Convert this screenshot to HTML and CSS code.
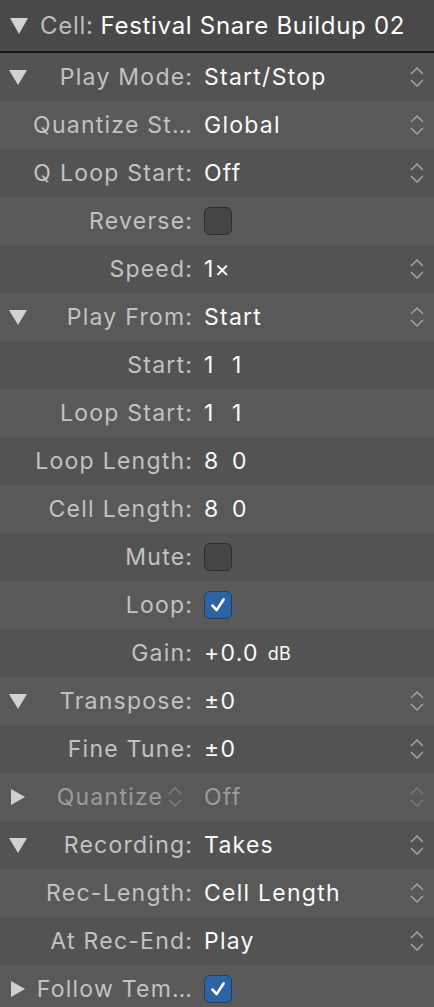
FILE: index.html
```html
<!DOCTYPE html>
<html>
<head>
<meta charset="utf-8">
<link rel="stylesheet" href="styles.css">
</head>
<body>
<div class="panel">
  <div class="header">
    <span class="tri-down big"></span>
    <span class="h-label">Cell:</span>
    <span class="h-value">Festival Snare Buildup 02</span>
  </div>

  <div class="row dark">
    <div class="lab"><span class="tri-down"></span><span class="t">Play Mode:</span></div>
    <div class="val">Start/Stop</div>
    <svg class="step" viewBox="0 0 14 22"><path d="M1 8 L7 2 L13 8 M1 14 L7 20 L13 14"/></svg>
  </div>
  <div class="row light">
    <div class="lab"><span class="t">Quantize St…</span></div>
    <div class="val">Global</div>
    <svg class="step" viewBox="0 0 14 22"><path d="M1 8 L7 2 L13 8 M1 14 L7 20 L13 14"/></svg>
  </div>
  <div class="row dark">
    <div class="lab"><span class="t">Q Loop Start:</span></div>
    <div class="val">Off</div>
    <svg class="step" viewBox="0 0 14 22"><path d="M1 8 L7 2 L13 8 M1 14 L7 20 L13 14"/></svg>
  </div>
  <div class="row light">
    <div class="lab"><span class="t">Reverse:</span></div>
    <div class="val"><span class="cb"></span></div>
  </div>
  <div class="row dark">
    <div class="lab"><span class="t">Speed:</span></div>
    <div class="val">1×</div>
    <svg class="step" viewBox="0 0 14 22"><path d="M1 8 L7 2 L13 8 M1 14 L7 20 L13 14"/></svg>
  </div>
  <div class="row light">
    <div class="lab"><span class="tri-down"></span><span class="t">Play From:</span></div>
    <div class="val">Start</div>
    <svg class="step" viewBox="0 0 14 22"><path d="M1 8 L7 2 L13 8 M1 14 L7 20 L13 14"/></svg>
  </div>
  <div class="row dark">
    <div class="lab"><span class="t">Start:</span></div>
    <div class="val"><span class="num">1</span><span class="num">1</span></div>
  </div>
  <div class="row light">
    <div class="lab"><span class="t">Loop Start:</span></div>
    <div class="val"><span class="num">1</span><span class="num">1</span></div>
  </div>
  <div class="row dark">
    <div class="lab"><span class="t">Loop Length:</span></div>
    <div class="val"><span class="num">8</span><span class="num">0</span></div>
  </div>
  <div class="row light">
    <div class="lab"><span class="t">Cell Length:</span></div>
    <div class="val"><span class="num">8</span><span class="num">0</span></div>
  </div>
  <div class="row dark">
    <div class="lab"><span class="t">Mute:</span></div>
    <div class="val"><span class="cb"></span></div>
  </div>
  <div class="row light">
    <div class="lab"><span class="t">Loop:</span></div>
    <div class="val"><span class="cb on"><svg viewBox="0 0 28 28"><path d="M8 14.5 L12.5 19.5 L20 8"/></svg></span></div>
  </div>
  <div class="row dark">
    <div class="lab"><span class="t">Gain:</span></div>
    <div class="val">+0.0<span class="unit">dB</span></div>
  </div>
  <div class="row light">
    <div class="lab"><span class="tri-down"></span><span class="t">Transpose:</span></div>
    <div class="val">±0</div>
    <svg class="step" viewBox="0 0 14 22"><path d="M1 8 L7 2 L13 8 M1 14 L7 20 L13 14"/></svg>
  </div>
  <div class="row dark">
    <div class="lab"><span class="t">Fine Tune:</span></div>
    <div class="val">±0</div>
    <svg class="step" viewBox="0 0 14 22"><path d="M1 8 L7 2 L13 8 M1 14 L7 20 L13 14"/></svg>
  </div>
  <div class="row light disabled">
    <div class="lab"><span class="tri-right"></span><span class="t">Quantize</span><svg class="step small" viewBox="0 0 14 22"><path d="M1 8 L7 2 L13 8 M1 14 L7 20 L13 14"/></svg></div>
    <div class="val">Off</div>
    <svg class="step" viewBox="0 0 14 22"><path d="M1 8 L7 2 L13 8 M1 14 L7 20 L13 14"/></svg>
  </div>
  <div class="row dark">
    <div class="lab"><span class="tri-down"></span><span class="t">Recording:</span></div>
    <div class="val">Takes</div>
    <svg class="step" viewBox="0 0 14 22"><path d="M1 8 L7 2 L13 8 M1 14 L7 20 L13 14"/></svg>
  </div>
  <div class="row light">
    <div class="lab"><span class="t">Rec-Length:</span></div>
    <div class="val">Cell Length</div>
    <svg class="step" viewBox="0 0 14 22"><path d="M1 8 L7 2 L13 8 M1 14 L7 20 L13 14"/></svg>
  </div>
  <div class="row dark">
    <div class="lab"><span class="t">At Rec-End:</span></div>
    <div class="val">Play</div>
    <svg class="step" viewBox="0 0 14 22"><path d="M1 8 L7 2 L13 8 M1 14 L7 20 L13 14"/></svg>
  </div>
  <div class="row light">
    <div class="lab"><span class="tri-right"></span><span class="t">Follow Tem…</span></div>
    <div class="val"><span class="cb on"><svg viewBox="0 0 28 28"><path d="M8 14.5 L12.5 19.5 L20 8"/></svg></span></div>
  </div>
</div>
</body>
</html>
```

FILE: styles.css
```css
html, body {
  margin: 0;
  padding: 0;
  background: #575757;
  overflow: hidden;
}
.panel {
  width: 434px;
  font-family: Inter, "Noto Sans", "Liberation Sans", sans-serif;
}
.header {
  height: 51px;
  background: #494949;
  border-bottom: 2px solid #141414;
  display: flex;
  align-items: center;
  padding-left: 10px;
  font-size: 24px;
  letter-spacing: 0.7px;
  box-sizing: content-box;
}
.h-label {
  color: #bdbdbd;
  margin-left: 12px;
}
.h-value {
  color: #ffffff;
  margin-left: 7px;
}
.row {
  height: 48px;
  display: grid;
  grid-template-columns: 192px 1fr auto;
  column-gap: 12px;
  align-items: center;
  font-size: 23px;
  letter-spacing: 1.25px;
  padding-right: 10px;
}
.row.dark { background: #535353; }
.row.light { background: #595959; }
.lab {
  display: flex;
  align-items: center;
  height: 100%;
  padding-left: 9px;
}
.lab .t {
  margin-left: auto;
  margin-right: -1.25px;
  color: #c2c2c2;
  white-space: nowrap;
}
.val {
  color: #fafafa;
  display: flex;
  align-items: center;
  white-space: pre;
}
.num { width: 28px; }
.unit { font-size: 18px; letter-spacing: 0.4px; margin-left: 9px; }
.tri-down {
  width: 0; height: 0;
  border-left: 9px solid transparent;
  border-right: 9px solid transparent;
  border-top: 15px solid #d2d2d2;
}
.tri-down.big {
  border-left-width: 9px;
  border-right-width: 9px;
  border-top-width: 16px;
}
.tri-right {
  width: 0; height: 0;
  border-top: 8px solid transparent;
  border-bottom: 8px solid transparent;
  border-left: 14px solid #cfcfcf;
  margin-left: 2px;
}
.step {
  width: 14px;
  height: 22px;
  fill: none;
  stroke: #a4a4a4;
  stroke-width: 1.5;
}
.step.small {
  stroke: #7e7e7e;
  margin-left: 6px;
  margin-right: 10px;
}
.cb {
  width: 26px;
  height: 26px;
  border-radius: 6px;
  background: #454545;
  border: 1px solid #2e2e2e;
  display: inline-flex;
}
.cb.on {
  background: #2d63a3;
  border-color: #1f3f66;
}
.cb svg {
  width: 26px;
  height: 26px;
  fill: none;
  stroke: #ffffff;
  stroke-width: 2.8;
  stroke-linecap: round;
  stroke-linejoin: round;
}
.disabled .t, .disabled .val { color: #9b9b9b; }
.disabled > .step { stroke: #777; }
```
